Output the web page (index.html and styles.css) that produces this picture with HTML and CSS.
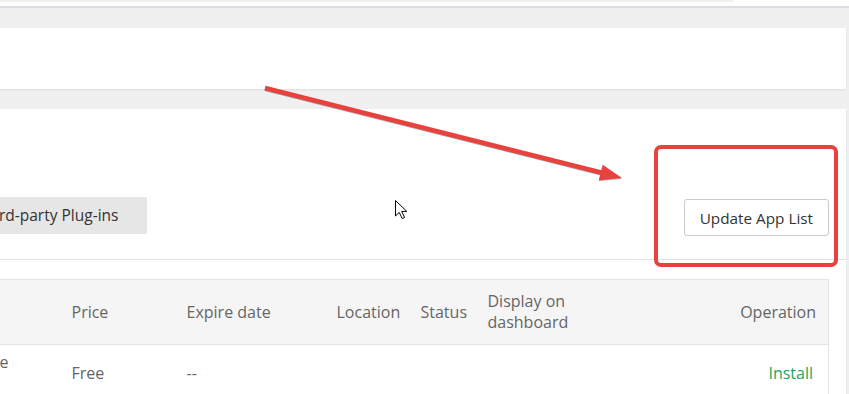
FILE: index.html
```html
<html>
    <head>
        <meta name="viewport" content="width=device-width, initial-scale=1.0">
        <link rel="stylesheet" href="styles.css">
    </head>
    <body>

        <div class="topbar">
            <div class="topbar-inner"></div>
        </div>

        <div class="content">
            <div class="card card-search"></div>

            <div class="card card-apps">
                <div class="toolbar">
                    <div class="tabs">
                        <span class="tab active">Third-party Plug-ins</span>
                    </div>
                    <button class="btn" type="button">Update App List</button>
                </div>
                <div class="divider"></div>

                <table class="app-table">
                    <colgroup>
                        <col class="col-name">
                        <col class="col-price">
                        <col class="col-expire">
                        <col class="col-location">
                        <col class="col-status">
                        <col class="col-display">
                        <col class="col-operation">
                    </colgroup>
                    <thead>
                        <tr>
                            <th>Name</th>
                            <th>Price</th>
                            <th>Expire date</th>
                            <th>Location</th>
                            <th>Status</th>
                            <th>Display on dashboard</th>
                            <th class="right">Operation</th>
                        </tr>
                    </thead>
                    <tbody>
                        <tr>
                            <td class="name">Surveillance<br>Station</td>
                            <td>Free</td>
                            <td>--</td>
                            <td></td>
                            <td></td>
                            <td></td>
                            <td class="right op"><a class="link-install">Install</a></td>
                        </tr>
                    </tbody>
                </table>
            </div>
        </div>

        <!-- annotation drawn over the screenshot -->
        <svg class="annotation" width="849" height="394" viewBox="0 0 849 394">
            <g class="mark-shadow">
                <line x1="265" y1="89" x2="603" y2="174" />
                <polygon points="622,179 599,181 603,166" />
            </g>
            <g class="mark">
                <line x1="265" y1="88" x2="603" y2="173" />
                <polygon points="622,178 598.7,180.4 602.7,164.8" />
                <rect x="656" y="147" width="180" height="118" rx="5" ry="5" />
            </g>
            <path class="cursor" d="M395.5 200.5 L395.5 216 L399.2 212.4 L402.2 218.5 L404.6 217.4 L401.7 211.4 L406.8 211.4 Z" />
        </svg>

    </body>
</html>
```

FILE: styles.css
```css
html, body {
    margin: 0;
    padding: 0;
    font-family: "Open Sans", "Noto Sans", sans-serif;
    font-size: 14px;
    color: #333;
}
body {
    width: 849px;
    height: 394px;
    overflow: hidden;
    background: #f0f0f0;
    position: relative;
}
.topbar {
    height: 6px;
    background: #fff;
    border-bottom: 2px solid #dcdce2;
}
.topbar-inner {
    width: 733px;
    height: 4px;
    border-top: 2px solid #f0f0f0;
    border-radius: 0 0 6px 0;
}
.content {
    padding: 20px 3px 0 0;
}
.card {
    background: #fff;
    box-shadow: 0 1px 2px rgba(0, 0, 0, 0.08);
}
.card-search {
    height: 61px;
    margin-bottom: 20px;
}
.card-apps {
    height: 300px;
}
.toolbar {
    display: flex;
    justify-content: space-between;
    align-items: flex-start;
    padding: 88px 17px 23px 0;
}
.tab {
    display: inline-block;
    height: 37px;
    line-height: 37px;
    padding: 0 29px 0 26px;
    margin-left: -49px;
    background: #e6e6e6;
    font-size: 15.5px;
    color: #333;
}
.btn {
    margin-top: 2px;
    height: 37px;
    padding: 0 15px;
    font-family: inherit;
    font-size: 15.3px;
    color: #333;
    background: #fff;
    border: 1px solid #ccc;
    border-radius: 3px;
}
.divider {
    height: 1px;
    background: #e3e3e3;
}
.app-table {
    table-layout: fixed;
    border-collapse: collapse;
    width: 922px;
    margin: 19px 0 0 -94px;
    border: 1px solid #e3e3e3;
    font-size: 16px;
    color: #666;
}
.col-name { width: 153px; }
.col-price { width: 115px; }
.col-expire { width: 150px; }
.col-location { width: 84px; }
.col-status { width: 67px; }
.col-display { width: 112px; }
.col-operation { width: 241px; }
.app-table th {
    background: #f5f5f5;
    font-weight: normal;
    text-align: left;
    line-height: 21px;
    padding: 11px 12px;
    border-bottom: 1px solid #e3e3e3;
    vertical-align: middle;
}
.app-table td {
    line-height: 21px;
    padding: 7px 12px;
    vertical-align: middle;
}
.app-table .right {
    text-align: right;
}
.app-table td.op {
    padding-right: 15px;
}
.link-install {
    color: #14a85e;
}
.annotation {
    position: absolute;
    left: 0;
    top: 0;
    pointer-events: none;
}
.mark line {
    stroke: #e8413e;
    stroke-width: 4.5;
}
.mark polygon {
    fill: #e8413e;
}
.mark rect {
    fill: none;
    stroke: #e8413e;
    stroke-width: 4;
}
.mark-shadow line {
    stroke: rgba(60, 60, 60, 0.45);
    stroke-width: 4;
}
.mark-shadow polygon {
    fill: rgba(60, 60, 60, 0.35);
}
.cursor {
    fill: #fff;
    stroke: #000;
    stroke-width: 1;
}
```
